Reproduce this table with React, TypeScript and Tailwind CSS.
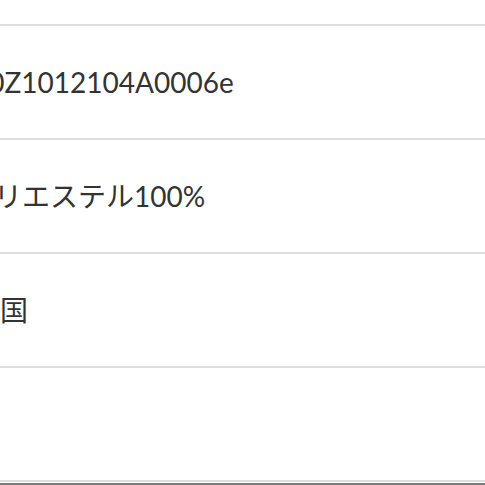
export default function App() {
  const rows = [
    { t: "00Z1012104A0006e", c: "ml-[-28px]" },
    { t: "ポリエステル100%", c: "ml-[-34px]" },
    { t: "中国", c: "ml-[-28px]" },
    { t: "", c: "" },
  ];
  return (
    <div
      className="w-[485px] h-[485px] overflow-hidden bg-white"
      style={{ fontFamily: 'Lato, "Noto Sans CJK JP", sans-serif' }}
    >
      <div className="h-[24px]" />
      {rows.map((r, i) => (
        <div
          key={i}
          className="h-[114px] border-t-2 border-[#dedede] flex items-center"
        >
          <span className={`${r.c} text-[28px] leading-none text-[#333] whitespace-nowrap`}>
            {r.t}
          </span>
        </div>
      ))}
      <div className="h-[3px] border-t-2 border-[#dedede]" />
      <div className="h-[2px] bg-[#7a7a7a]" />
    </div>
  );
}
